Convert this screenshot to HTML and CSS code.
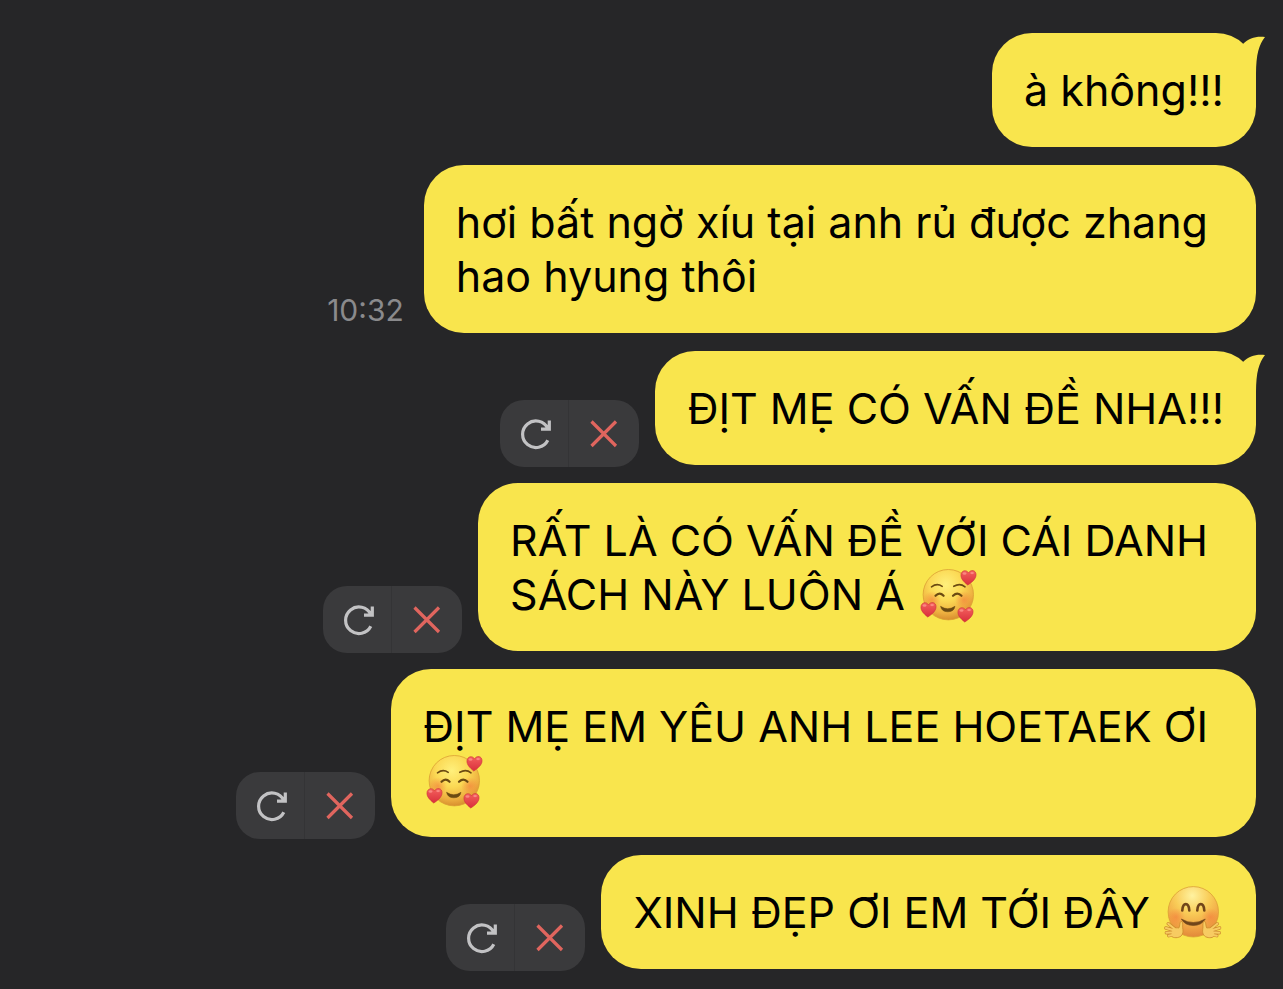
FILE: index.html
```html
<!DOCTYPE html>
<html lang="vi">
<head>
  <meta charset="UTF-8" />
  <meta name="viewport" content="width=device-width, initial-scale=1.0"/>
  <title>Chat</title>
  <link rel="stylesheet" href="styles.css">
</head>
<body>
  <svg class="defs" width="0" height="0" aria-hidden="true">
    <defs>
      <radialGradient id="face" cx="0.45" cy="0.3" r="0.72">
        <stop offset="0" stop-color="#fff07c"/>
        <stop offset="0.45" stop-color="#fbd954"/>
        <stop offset="0.78" stop-color="#eeb040"/>
        <stop offset="1" stop-color="#d58a2c"/>
      </radialGradient>
      <radialGradient id="hugface" cx="0.48" cy="0.18" r="0.85">
        <stop offset="0" stop-color="#fff2a0"/>
        <stop offset="0.4" stop-color="#f9cd58"/>
        <stop offset="0.75" stop-color="#f0a344"/>
        <stop offset="1" stop-color="#df8438"/>
      </radialGradient>
      <radialGradient id="blush">
        <stop offset="0" stop-color="#f47c3c" stop-opacity="0.6"/>
        <stop offset="1" stop-color="#f47c3c" stop-opacity="0"/>
      </radialGradient>
      <linearGradient id="heartfill" x1="0" y1="0" x2="0" y2="1">
        <stop offset="0" stop-color="#f4605c"/>
        <stop offset="1" stop-color="#d92f3c"/>
      </linearGradient>
    </defs>
    <symbol id="tail" viewBox="0 0 26 38">
      <path d="M3 8C9 2 16 0 25 1C19 9 16 18 16 38H3Z"/>
    </symbol>
    <symbol id="retry" viewBox="0 0 34 34">
      <path d="M30.800 11.300A13.300 13.300 0 1 0 30.800 23.200M32.300 3.500V12.200H24" fill="none" stroke="currentColor" stroke-width="3.200"/>
    </symbol>
    <symbol id="cross" viewBox="0 0 34 34">
      <path d="M4.500 4.500L29 29M29 4.500L4.500 29" fill="none" stroke="currentColor" stroke-width="3.200"/>
    </symbol>
    <symbol id="heart" viewBox="0 0 18 18">
      <path d="M8.200 17C4 13.500 1 10.500 1 6.500C1 1.500 6.800 0 9 4.200C11.200 0 17 1 17 6C17 10.500 13 13.800 8.200 17Z" fill="url(#heartfill)" stroke="#cb3038" stroke-width="0.600"/>
      <ellipse cx="4.800" cy="4.800" rx="2" ry="1.300" fill="#ff9c94" opacity="0.700"/>
      <ellipse cx="12.800" cy="4.300" rx="2" ry="1.200" fill="#ff9c94" opacity="0.700"/>
    </symbol>
    <symbol id="loving" viewBox="0 0 58 56">
      <circle cx="29.300" cy="26.700" r="25.200" fill="url(#face)" stroke="#dca035" stroke-width="0.800"/>
      <circle cx="13" cy="32" r="9" fill="url(#blush)"/>
      <circle cx="45" cy="32" r="9" fill="url(#blush)"/>
      <g fill="none" stroke="#6b4a12" stroke-linecap="round">
        <path d="M12.500 18.800Q18 14.800 23.200 18.300M34.800 18.300Q41 14.800 46 18.800" stroke-width="1.600"/>
        <path d="M16.500 27.800Q20.500 23.500 24.600 27.800M34 27.800Q38.500 23.500 42.500 27.800" stroke-width="2.200"/>
      </g>
      <path d="M21.500 38.300Q28.800 43.200 36 38.300Q35 43.800 28.800 43.800Q22.800 43.800 21.500 38.300Z" fill="#6b4a12" stroke="#6b4a12" stroke-width="0.500"/>
      <use href="#heart" x="41" y="1" width="17" height="17"/>
      <use href="#heart" x="1" y="33" width="17" height="17"/>
      <use href="#heart" x="38" y="38" width="17" height="17"/>
    </symbol>
    <symbol id="hand" viewBox="0 0 22 22">
      <path d="M9.500 17.500L5 18.500M9.500 15L2.500 15.500M10 12.500L2 10.500M11 11L4.500 6" fill="none" stroke="#cf8c2e" stroke-width="3.600" stroke-linecap="round"/>
      <path d="M18.500 3.500C20.500 5 19 9 19.800 12C20.500 17 18 20 14 20.500C10 21 7 20 7.500 16C8 12 12 9.500 15.500 10.500C17 8 16 3.500 18.500 3.500Z" fill="#f7cb62" stroke="#cf8c2e" stroke-width="0.900"/>
      <path d="M10.500 17.500L5 18.500M10.500 15L2.500 15.500M11 13L2 10.500M12 12L4.500 6" fill="none" stroke="#f7cb62" stroke-width="2.200" stroke-linecap="round"/>
    </symbol>
    <symbol id="hugging" viewBox="0 2 58 56">
      <circle cx="29.300" cy="27.800" r="25.200" fill="url(#hugface)" stroke="#dca035" stroke-width="0.800"/>
      <circle cx="12" cy="33" r="9" fill="url(#blush)"/>
      <circle cx="46.500" cy="33" r="9" fill="url(#blush)"/>
      <path d="M18.300 26.500C18.800 18 24.800 18 25.300 26.500M33.300 26.500C33.800 18 39.800 18 40.300 26.500" fill="none" stroke="#71451a" stroke-width="2.600" stroke-linecap="round"/>
      <path d="M17.300 35Q29.300 42 41.300 35Q37.500 41.500 29.300 41.500Q21 41.500 17.300 35Z" fill="#71451a" stroke="#71451a" stroke-width="0.600"/>
      <use href="#hand" x="0" y="34" width="21" height="21"/>
      <g transform="translate(57.600 0) scale(-1 1)">
        <use href="#hand" x="0" y="34" width="21" height="21"/>
      </g>
    </symbol>
  </svg>

  <main class="chat">
    <div class="message">
      <p class="bubble">à không!!!<svg class="tail" aria-hidden="true"><use href="#tail"/></svg></p>
    </div>

    <div class="message">
      <time class="time">10:32</time>
      <p class="bubble wrapped">hơi bất ngờ xíu tại anh rủ được zhang<br>hao hyung thôi</p>
    </div>

    <div class="message">
      <div class="actions">
        <button type="button" class="retry" aria-label="Gửi lại"><svg class="icon"><use href="#retry"/></svg></button>
        <button type="button" class="delete" aria-label="Xóa"><svg class="icon"><use href="#cross"/></svg></button>
      </div>
      <p class="bubble">ĐỊT MẸ CÓ VẤN ĐỀ NHA!!!<svg class="tail" aria-hidden="true"><use href="#tail"/></svg></p>
    </div>

    <div class="message">
      <div class="actions">
        <button type="button" class="retry" aria-label="Gửi lại"><svg class="icon"><use href="#retry"/></svg></button>
        <button type="button" class="delete" aria-label="Xóa"><svg class="icon"><use href="#cross"/></svg></button>
      </div>
      <p class="bubble wrapped">RẤT LÀ CÓ VẤN ĐỀ VỚI CÁI DANH<br>SÁCH NÀY LUÔN Á <svg class="emoji" role="img" aria-label="🥰"><use href="#loving"/></svg></p>
    </div>

    <div class="message">
      <div class="actions">
        <button type="button" class="retry" aria-label="Gửi lại"><svg class="icon"><use href="#retry"/></svg></button>
        <button type="button" class="delete" aria-label="Xóa"><svg class="icon"><use href="#cross"/></svg></button>
      </div>
      <p class="bubble wrapped">ĐỊT MẸ EM YÊU ANH LEE HOETAEK ƠI<br><svg class="emoji" role="img" aria-label="🥰"><use href="#loving"/></svg></p>
    </div>

    <div class="message">
      <div class="actions">
        <button type="button" class="retry" aria-label="Gửi lại"><svg class="icon"><use href="#retry"/></svg></button>
        <button type="button" class="delete" aria-label="Xóa"><svg class="icon"><use href="#cross"/></svg></button>
      </div>
      <p class="bubble">XINH ĐẸP ƠI EM TỚI ĐÂY <svg class="emoji" role="img" aria-label="🤗"><use href="#hugging"/></svg></p>
    </div>
  </main>
</body>
</html>
```

FILE: styles.css
```css
body {
  margin: 0;
  background-color: #262628;
  font-family: Inter, "Liberation Sans", sans-serif;
}
.defs {
  position: absolute;
}
.chat {
  display: flex;
  flex-direction: column;
  gap: 18px;
  padding: 33px 27px 20px;
}
.message {
  display: flex;
  justify-content: flex-end;
  align-items: flex-end;
}
.bubble {
  position: relative;
  margin: 0;
  padding: 30px 32px;
  border-radius: 40px;
  background-color: #f9e54d;
  color: #000;
  font-size: 43px;
  line-height: 54px;
}
.bubble.wrapped {
  padding-right: 48px;
}
.tail {
  position: absolute;
  top: 3px;
  right: -10px;
  width: 26px;
  height: 38px;
  fill: #f9e54d;
}
.emoji {
  width: 58px;
  height: 56px;
  margin: -8px 2px -14px;
}
.time {
  margin: 0 20px 6px 0;
  color: #8a8a8c;
  font-size: 30px;
  line-height: 34px;
}
.actions {
  display: flex;
  flex-shrink: 0;
  margin: 0 16px -2px 0;
  border-radius: 24px;
  background-color: #3a3a3c;
  overflow: hidden;
}
.actions button {
  display: flex;
  align-items: center;
  justify-content: center;
  width: 70px;
  height: 67px;
  padding: 0;
  border: none;
  background: none;
  cursor: pointer;
}
.actions .retry {
  width: 69px;
  border-right: 1px solid #343436;
  color: #c2c2c4;
}
.actions .delete {
  color: #e0655e;
}
.actions button:hover {
  background-color: #444446;
}
.icon {
  width: 34px;
  height: 34px;
}
```
